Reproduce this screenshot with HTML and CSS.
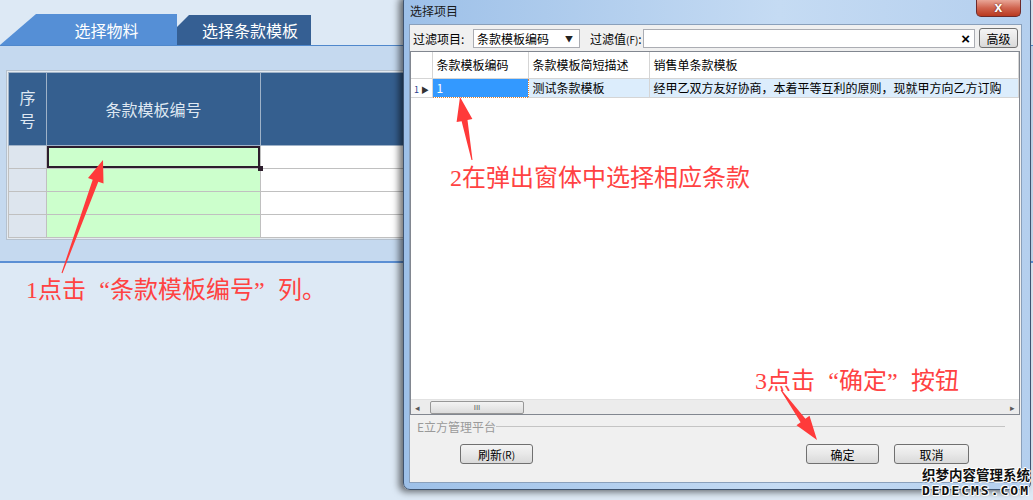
FILE: index.html
```html
<!DOCTYPE html>
<html lang="zh-CN">
<head>
    <meta charset="UTF-8">
    <meta name="viewport" content="width=device-width, initial-scale=1.0">
    <title>选择条款模板</title>
    <link rel="stylesheet" href="styles.css">
</head>
<body>
    <!-- main page behind the dialog -->
    <div class="page">
        <div class="tabbar">
            <div class="tab tab-first">选择物料</div>
            <div class="tab tab-active">选择条款模板</div>
        </div>
        <div class="panel">
            <div class="grid-frame">
                <table class="grid">
                    <tr class="grid-head">
                        <th class="c-no">序<br>号</th>
                        <th class="c-code">条款模板编号</th>
                        <th class="c-rest"></th>
                    </tr>
                    <tr><td class="c-no"></td><td class="c-code current"></td><td></td></tr>
                    <tr><td class="c-no"></td><td class="c-code"></td><td></td></tr>
                    <tr><td class="c-no"></td><td class="c-code"></td><td></td></tr>
                    <tr><td class="c-no"></td><td class="c-code"></td><td></td></tr>
                </table>
            </div>
        </div>
    </div>

    <!-- popup window -->
    <div class="dialog">
        <div class="titlebar">
            <span class="title">选择项目</span>
            <span class="close-btn">x</span>
        </div>
        <div class="client">
            <div class="filter-row">
                <span class="lbl lbl-item">过滤项目:</span>
                <div class="combo"><span>条款模板编码</span><span class="drop">▼</span></div>
                <span class="lbl lbl-value">过滤值<span class="key">(F)</span>:</span>
                <div class="textbox"><span class="clear">×</span></div>
                <div class="btn btn-adv">高级</div>
            </div>
            <div class="list">
                <table class="list-grid">
                    <colgroup>
                        <col class="w-rh"><col class="w-1"><col class="w-2"><col>
                    </colgroup>
                    <tr class="list-head">
                        <th></th>
                        <th>条款模板编码</th>
                        <th>条款模板简短描述</th>
                        <th>销售单条款模板</th>
                    </tr>
                    <tr class="list-row">
                        <td class="rh"><span class="rh-num">1</span><span class="rh-arrow">▶</span></td>
                        <td class="cell-active">1</td>
                        <td>测试条款模板</td>
                        <td>经甲乙双方友好协商，本着平等互利的原则，现就甲方向乙方订购</td>
                    </tr>
                </table>
                <div class="list-fill"></div>
                <div class="hscroll">
                    <span class="sc-arrow">◂</span>
                    <div class="sc-thumb">III</div>
                    <span class="sc-arrow sc-right">▸</span>
                </div>
            </div>
            <div class="group">
                <span class="group-label">E立方管理平台</span>
                <span class="group-line"></span>
            </div>
            <div class="buttons">
                <div class="btn btn-refresh">刷新<span class="key">(R)</span></div>
                <div class="btn btn-ok">确定</div>
                <div class="btn btn-cancel">取消</div>
            </div>
        </div>
    </div>

    <!-- annotations -->
    <svg class="arrows" width="1033" height="500" viewBox="0 0 1033 500">
        <polygon points="62.5,273.2 98.3,181.7 103.5,183.6 103,160 88,178 92.7,179.7 61.5,272.8"/>
        <polygon points="472.5,159.9 467.5,120 472.4,119.1 460,97 456.6,122.1 461.6,121.2 471.5,160.1"/>
        <polygon points="780.6,390.3 800.6,422.3 796.5,425.2 817,440 809.5,415.8 805.4,418.8 781.4,389.7"/>
    </svg>
    <div class="note note-1">1点击<span class="q ql">“</span>条款模板编号<span class="q qr">”</span>列。</div>
    <div class="note note-2">2在弹出窗体中选择相应条款</div>
    <div class="note note-3">3点击<span class="q ql">“</span>确定<span class="q qr">”</span>按钮</div>

    <div class="watermark">
        <div class="wm-cn">织梦内容管理系统</div>
        <div class="wm-en">DEDECMS.COM</div>
    </div>
</body>
</html>
```

FILE: styles.css
```css
* {
    box-sizing: border-box;
}
body {
    margin: 0;
    width: 1033px;
    height: 500px;
    overflow: hidden;
    position: relative;
    background-color: #dde9f5;
    font-family: "Noto Sans CJK SC", sans-serif;
    font-size: 12px;
    color: #000;
}

/* ---- main page ---- */
.tabbar {
    height: 46px;
    display: flex;
    align-items: flex-end;
    border-bottom: 1px solid #4f88cc;
}
.tab {
    color: #ffffff;
    font-size: 16px;
    display: flex;
    align-items: center;
    justify-content: center;
}
.tab-first {
    width: 177px;
    height: 31px;
    padding-left: 36px;
    background-color: #558fd6;
    clip-path: polygon(36px 0, 100% 0, 100% 100%, 0 100%);
}
.tab-active {
    width: 134px;
    height: 30px;
    padding-left: 12px;
    background-color: #355f93;
    clip-path: polygon(12px 0, 100% 0, 100% 100%, 0 100%, 0 12px);
}
.panel {
    height: 217px;
    background-color: #c5d9ef;
    border-bottom: 2px solid #5b8fd4;
    padding: 24px 0 0 6px;
}
.grid-frame {
    width: 540px;
    border: 1px solid #b5c1ce;
    padding: 1px;
    background-color: #e4eaf0;
}
.grid {
    width: 100%;
    border-collapse: collapse;
    table-layout: fixed;
}
.grid th {
    height: 73px;
    background-color: #355f8f;
    color: #dfe8f2;
    font-size: 16px;
    font-weight: normal;
    border: 1px solid #9fb2c8;
    line-height: 23px;
}
.grid td {
    height: 23px;
    border: 1px solid #c0c0c0;
    background-color: #ffffff;
}
.grid .c-no {
    width: 38px;
}
.grid .c-code {
    width: 214px;
}
.grid td.c-no {
    background-color: #dde5ee;
}
.grid td.c-code {
    background-color: #ccffcc;
}
.grid td.current {
    position: relative;
    box-shadow: inset 0 0 0 2px #2d1d2d;
}
.grid td.current::after {
    content: "";
    position: absolute;
    right: -3px;
    bottom: -3px;
    width: 5px;
    height: 5px;
    background-color: #2d1d2d;
}

/* ---- dialog ---- */
.dialog {
    position: absolute;
    left: 403px;
    top: -6px;
    width: 628px;
    height: 496px;
    border: 1px solid #3f5470;
    border-radius: 7px;
    background: linear-gradient(to right, #9dc0e8, #c5dbf3 60%, #b4cfee);
    box-shadow: -4px 2px 7px rgba(0, 0, 0, 0.55);
    padding: 0 8px 6px 5px;
    display: flex;
    flex-direction: column;
}
.titlebar {
    height: 29px;
    position: relative;
    padding: 7px 0 0 1px;
    line-height: 17px;
}
.title {
    color: #1a1a1a;
}
.close-btn {
    position: absolute;
    right: 1px;
    top: 5px;
    width: 45px;
    height: 17px;
    border: 1px solid #6d2a2a;
    border-top: none;
    border-radius: 0 0 5px 5px;
    background: linear-gradient(#e9a697, #d0644f 50%, #b9391f);
    color: #ffffff;
    font-family: "Liberation Sans", sans-serif;
    font-weight: bold;
    font-size: 14px;
    line-height: 14px;
    text-align: center;
    text-shadow: 0 0 2px #5a1a10;
}
.client {
    flex: 1;
    background-color: #f0f0f0;
    border: 1px solid #8aa0bb;
    display: flex;
    flex-direction: column;
}
.filter-row {
    height: 26px;
    display: flex;
    align-items: center;
    padding-left: 3px;
}
.lbl {
    white-space: nowrap;
}
.key {
    font-size: 10px;
}
.lbl-item {
    width: 60px;
}
.combo {
    width: 107px;
    height: 19px;
    background-color: #ffffff;
    border: 1px solid #abadb3;
    display: flex;
    align-items: center;
    justify-content: space-between;
    padding: 0 6px 0 3px;
}
.drop {
    font-size: 8px;
    color: #222;
}
.lbl-value {
    width: 53px;
    margin-left: 10px;
}
.textbox {
    width: 332px;
    height: 19px;
    background-color: #ffffff;
    border: 1px solid #abadb3;
    display: flex;
    align-items: center;
    justify-content: flex-end;
    padding-right: 4px;
}
.clear {
    font-family: "Liberation Sans", sans-serif;
    font-weight: bold;
    font-size: 15px;
}
.btn {
    height: 20px;
    border: 1px solid #707070;
    border-radius: 3px;
    background: linear-gradient(#f4f4f4, #e8e8e8 50%, #d9d9d9);
    display: flex;
    align-items: center;
    justify-content: center;
}
.btn-adv {
    width: 39px;
    margin-left: 4px;
}
.list {
    height: 364px;
    margin-right: 1px;
    background-color: #ffffff;
    border: 1px solid #828790;
    display: flex;
    flex-direction: column;
}
.list-grid {
    width: 100%;
    border-collapse: collapse;
    table-layout: fixed;
}
.w-rh {
    width: 21px;
}
.w-1 {
    width: 96px;
}
.w-2 {
    width: 121px;
}
.list-grid th {
    height: 26px;
    font-weight: normal;
    text-align: left;
    padding-left: 4px;
    background-color: #ffffff;
    border-right: 1px solid #d5d5d5;
    border-bottom: 1px solid #d5d5d5;
}
.list-grid td {
    height: 19px;
    padding: 0 0 0 4px;
    white-space: nowrap;
    overflow: hidden;
    background-color: #dcedfc;
    border-right: 1px solid #d5d5d5;
    border-bottom: 1px solid #d5d5d5;
}
.list-grid td.rh {
    background-color: #ffffff;
    padding-left: 3px;
}
.rh-num {
    font-size: 9px;
    color: #2a3f8f;
}
.rh-arrow {
    font-size: 8px;
    color: #333;
    margin-left: 2px;
}
.list-grid td.cell-active {
    background-color: #3399ff;
    color: #ffffff;
    border: 1px dotted #e08030;
}
.list-fill {
    flex: 1;
}
.hscroll {
    height: 15px;
    background-color: #ececec;
    border-top: 1px solid #e2e2e2;
    display: flex;
    align-items: center;
    padding: 0 4px;
}
.sc-arrow {
    font-size: 9px;
    color: #5a5a5a;
    width: 12px;
}
.sc-thumb {
    width: 94px;
    height: 13px;
    margin-left: 3px;
    border: 1px solid #979797;
    border-radius: 2px;
    background: linear-gradient(#f3f3f3, #dcdcdc);
    font-family: "Liberation Sans", sans-serif;
    font-size: 8px;
    line-height: 11px;
    color: #606060;
    text-align: center;
}
.sc-right {
    margin-left: auto;
    text-align: right;
}
.group {
    height: 22px;
    display: flex;
    align-items: center;
    padding: 0 16px 0 7px;
}
.group-label {
    color: #9a9a9a;
}
.group-line {
    flex: 1;
    border-top: 1px solid #c4c4c4;
}
.buttons {
    display: flex;
    margin-top: 7px;
    padding: 0 52px 0 50px;
}
.btn-refresh {
    width: 73px;
}
.btn-ok {
    width: 73px;
    margin-left: auto;
}
.btn-cancel {
    width: 75px;
    margin-left: 15px;
}

/* ---- annotations ---- */
.arrows {
    position: absolute;
    left: 0;
    top: 0;
    fill: #ff3a3a;
}
.note {
    position: absolute;
    font-family: "Liberation Serif", "Noto Sans CJK SC", serif;
    font-size: 24px;
    line-height: 24px;
    color: #ff4242;
    white-space: nowrap;
}
.q {
    display: inline-block;
    width: 24px;
    font-family: "Liberation Serif", serif;
}
.ql {
    text-align: right;
}
.qr {
    text-align: left;
}
.note-1 {
    left: 26px;
    top: 278px;
}
.note-2 {
    left: 450px;
    top: 166px;
}
.note-3 {
    left: 755px;
    top: 369px;
}
.watermark {
    position: absolute;
    right: 3px;
    bottom: 2px;
    text-align: right;
    font-weight: bold;
    color: #111;
    text-shadow: 1px 0 0 #fff, -1px 0 0 #fff, 0 1px 0 #fff, 0 -1px 0 #fff, 1px 1px 0 #fff, -1px -1px 0 #fff;
}
.wm-cn {
    font-size: 13.5px;
    line-height: 18px;
}
.wm-en {
    font-family: "DejaVu Sans Mono", monospace;
    font-size: 13px;
    line-height: 15px;
    letter-spacing: 2px;
}
```
